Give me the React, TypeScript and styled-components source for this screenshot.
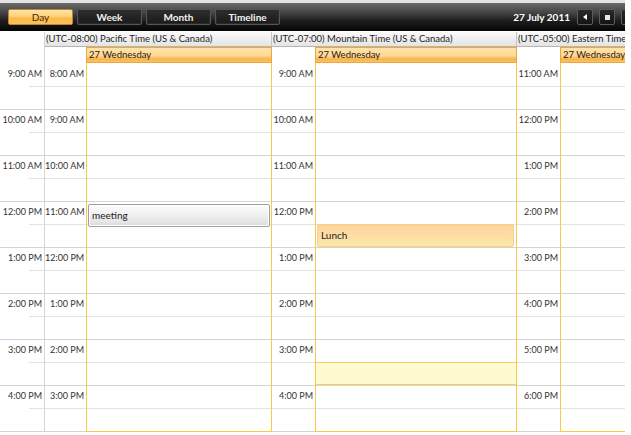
import React from 'react'
import styled, { createGlobalStyle } from 'styled-components'

const SLOT = 23
const SLOT_COUNT = 17

type Group = {
  zone: string
  hours: string[]
  dayWidth: number
  rulerWidth: number
}

const leftHours = ['9:00 AM', '10:00 AM', '11:00 AM', '12:00 PM', '1:00 PM', '2:00 PM', '3:00 PM', '4:00 PM']

const groups: Group[] = [
  {
    zone: '(UTC-08:00) Pacific Time (US & Canada)',
    hours: ['8:00 AM', '9:00 AM', '10:00 AM', '11:00 AM', '12:00 PM', '1:00 PM', '2:00 PM', '3:00 PM'],
    rulerWidth: 41,
    dayWidth: 186,
  },
  {
    zone: '(UTC-07:00) Mountain Time (US & Canada)',
    hours: ['9:00 AM', '10:00 AM', '11:00 AM', '12:00 PM', '1:00 PM', '2:00 PM', '3:00 PM', '4:00 PM'],
    rulerWidth: 43,
    dayWidth: 202,
  },
  {
    zone: '(UTC-05:00) Eastern Time (US & Canada)',
    hours: ['11:00 AM', '12:00 PM', '1:00 PM', '2:00 PM', '3:00 PM', '4:00 PM', '5:00 PM', '6:00 PM'],
    rulerWidth: 43,
    dayWidth: 202,
  },
]

// labels only on the first half-hour of each hour that is in view
const labelAt = (hours: string[], i: number) => (i % 2 === 0 ? hours[i / 2] ?? '' : '')

export default function App() {
  return (
    <>
      <GlobalStyle />
      <Scheduler>
        <Toolbar>
          <ViewButton $active>Day</ViewButton>
          <ViewButton>Week</ViewButton>
          <ViewButton>Month</ViewButton>
          <ViewButton>Timeline</ViewButton>
          <ToolbarSpacer />
          <CurrentDate>27 July 2011</CurrentDate>
          <NavGroup>
            <NavButton>
              <svg width="4" height="6" viewBox="0 0 4 6"><path d="M4 0 L0 3 L4 6 Z" fill="#fff" /></svg>
            </NavButton>
            <NavButton>
              <svg width="5" height="5" viewBox="0 0 5 5"><rect width="5" height="5" fill="#e8e8e8" /></svg>
            </NavButton>
            <NavButton>
              <svg width="4" height="6" viewBox="0 0 4 6"><path d="M0 0 L4 3 L0 6 Z" fill="#fff" /></svg>
            </NavButton>
          </NavGroup>
        </Toolbar>

        <Body>
          <Ruler $width={44} $main>
            <RulerHead $height={32} />
            {Array.from({ length: SLOT_COUNT }, (_, i) => (
              <RulerSlot key={i} $hour={i % 2 === 1} $inset={i % 2 === 0 ? 29 : 0}>
                {labelAt(leftHours, i)}
              </RulerSlot>
            ))}
          </Ruler>

          {groups.map((g, gi) => (
            <GroupColumn key={gi}>
              <ZoneHeader>{g.zone}</ZoneHeader>
              <GroupRow>
                <Ruler $width={g.rulerWidth}>
                  <RulerHead $height={17} />
                  {Array.from({ length: SLOT_COUNT }, (_, i) => (
                    <RulerSlot key={i} $hour={i % 2 === 1} $inset={0}>
                      {labelAt(g.hours, i)}
                    </RulerSlot>
                  ))}
                </Ruler>
                <DayColumn $width={g.dayWidth}>
                  <DateHeader>27 Wednesday</DateHeader>
                  <DaySlots>
                    {Array.from({ length: SLOT_COUNT }, (_, i) => (
                      <DaySlot key={i} $hour={i % 2 === 1} />
                    ))}
                    {gi === 0 && <Appointment $top={140} $left={1} $right={1}>meeting</Appointment>}
                    {gi === 1 && <Appointment $top={160} $left={1} $right={2} $warm>Lunch</Appointment>}
                    {gi === 1 && <SelectedSlot $top={298} />}
                  </DaySlots>
                </DayColumn>
              </GroupRow>
            </GroupColumn>
          ))}
        </Body>
      </Scheduler>
    </>
  )
}

const GlobalStyle = createGlobalStyle`
  html, body {
    margin: 0;
    padding: 0;
    background: #fff;
  }
  body {
    font-family: Lato, "Open Sans", sans-serif;
    color: #222;
  }
`

const Scheduler = styled('div')`
  width: 625px;
  height: 432px;
  overflow: hidden;
  display: flex;
  flex-direction: column;
  background: #fff;
`

const Toolbar = styled('div')`
  flex: 0 0 28px;
  height: 28px;
  border-top: 3px solid #e3e3e3;
  margin-bottom: 1px;
  display: flex;
  align-items: center;
  padding: 0 8px;
  background: linear-gradient(#6a6a6a 0%, #444 35%, #1c1c1c 65%, #050505 100%);
`

const ViewButton = styled('div')<{ $active?: boolean }>`
  flex: 0 0 auto;
  width: 63px;
  height: 14px;
  margin-right: 4px;
  display: flex;
  align-items: center;
  justify-content: center;
  font-size: 10px;
  border-radius: 2px;
  border: 1px solid ${({ $active }) => ($active ? '#b8863a' : '#555')};
  color: ${({ $active }) => ($active ? '#3a2a10' : '#f2f2f2')};
  font-weight: ${({ $active }) => ($active ? 400 : 700)};
  background: ${({ $active }) =>
    $active
      ? 'linear-gradient(#ffe4a6 0%, #ffd07a 45%, #fbb845 60%, #fcc25c 100%)'
      : 'linear-gradient(#2e2e2e, #1a1a1a)'};
  box-shadow: ${({ $active }) => ($active ? 'none' : 'inset 0 0 0 1px #2a2a2a')};
`

const ToolbarSpacer = styled('div')`
  flex: 1;
`

const CurrentDate = styled('div')`
  flex: 0 0 auto;
  color: #fff;
  font-weight: 700;
  font-size: 10px;
  margin-right: 7px;
`

const NavGroup = styled('div')`
  flex: 0 0 auto;
  display: flex;
  gap: 6px;
  margin-right: -20px;
`

const NavButton = styled('div')`
  width: 14px;
  height: 14px;
  border: 1px solid #5c5c5c;
  border-radius: 2px;
  display: flex;
  align-items: center;
  justify-content: center;
  background: linear-gradient(#2a2a2a, #141414);
`

const Body = styled('div')`
  flex: 1;
  min-height: 0;
  display: flex;
  overflow: hidden;
`

const Ruler = styled('div')<{ $width: number; $main?: boolean }>`
  flex: 0 0 ${({ $width }) => $width}px;
  width: ${({ $width }) => $width}px;
  min-height: 0;
  overflow: hidden;
  border-right: ${({ $main }) => ($main ? '1px solid #d6d6d6' : 'none')};
  display: flex;
  flex-direction: column;
`

const RulerHead = styled('div')<{ $height: number }>`
  flex: 0 0 ${({ $height }) => $height}px;
`

const RulerSlot = styled('div')<{ $hour: boolean; $inset: number }>`
  flex: 0 0 ${SLOT}px;
  height: ${SLOT}px;
  box-sizing: border-box;
  padding: 4px 2px 0 0;
  text-align: right;
  font-size: 9px;
  line-height: 11px;
  color: #333;
  white-space: nowrap;
  background: linear-gradient(${({ $hour }) => ($hour ? '#d4d4d4' : '#e2e2e2')}, ${({ $hour }) => ($hour ? '#d4d4d4' : '#e2e2e2')}) no-repeat right bottom;
  background-size: calc(100% - ${({ $inset }) => $inset}px) 1px;
`

const GroupColumn = styled('div')`
  flex: 0 0 auto;
  min-height: 0;
  display: flex;
  flex-direction: column;
`

const ZoneHeader = styled('div')`
  flex: 0 0 14px;
  height: 14px;
  border-bottom: 1px solid #b5b5b5;
  border-right: 1px solid #c4c4c4;
  padding-left: 1px;
  font-size: 9.5px;
  line-height: 14px;
  color: #222;
  white-space: nowrap;
  overflow: hidden;
  background: linear-gradient(#fafafa, #e4e4e4);
`

const GroupRow = styled('div')`
  flex: 1;
  min-height: 0;
  display: flex;
`

const DayColumn = styled('div')<{ $width: number }>`
  flex: 0 0 ${({ $width }) => $width}px;
  width: ${({ $width }) => $width}px;
  min-height: 0;
  box-sizing: border-box;
  display: flex;
  flex-direction: column;
  border-left: 1px solid #f8c94f;
  border-right: 1px solid #f8c94f;
  border-bottom: 1px solid #f8c94f;
`

const DateHeader = styled('div')`
  flex: 0 0 16px;
  height: 16px;
  box-sizing: border-box;
  margin: 0 -1px;
  padding-left: 2px;
  border: 1px solid #eaa93c;
  font-size: 9.5px;
  line-height: 14px;
  color: #2a2010;
  white-space: nowrap;
  overflow: hidden;
  background: linear-gradient(#ffe3ab 0%, #ffd894 55%, #f8b34c 80%, #fbc464 100%);
`

const DaySlots = styled('div')`
  flex: 1;
  min-height: 0;
  position: relative;
  overflow: hidden;
  margin-top: 1px;
`

const DaySlot = styled('div')<{ $hour: boolean }>`
  height: ${SLOT}px;
  box-sizing: border-box;
  border-bottom: 1px solid ${({ $hour }) => ($hour ? '#d4d4d4' : '#e2e2e2')};
`

const Appointment = styled('div')<{ $top: number; $left: number; $right: number; $warm?: boolean }>`
  position: absolute;
  top: ${({ $top }) => $top}px;
  left: ${({ $left }) => $left}px;
  right: ${({ $right }) => $right}px;
  height: 23px;
  box-sizing: border-box;
  padding: 3px 0 0 3px;
  font-size: 10px;
  line-height: 14px;
  color: #222;
  border-radius: 2px;
  border: 1px solid ${({ $warm }) => ($warm ? '#f5d27e' : '#9e9e9e')};
  background: ${({ $warm }) =>
    $warm ? 'linear-gradient(#fdd2a0, #fde7a8)' : 'linear-gradient(#fdfdfd, #e6e6e6 80%, #d8d8d8)'};
  box-shadow: ${({ $warm }) => ($warm ? 'none' : 'inset 0 0 0 1px #fff')};
`

const SelectedSlot = styled('div')<{ $top: number }>`
  position: absolute;
  top: ${({ $top }) => $top}px;
  left: -1px;
  right: -1px;
  height: 23px;
  box-sizing: border-box;
  border: 1px solid #f5cd5e;
  background: #fffad0;
`
